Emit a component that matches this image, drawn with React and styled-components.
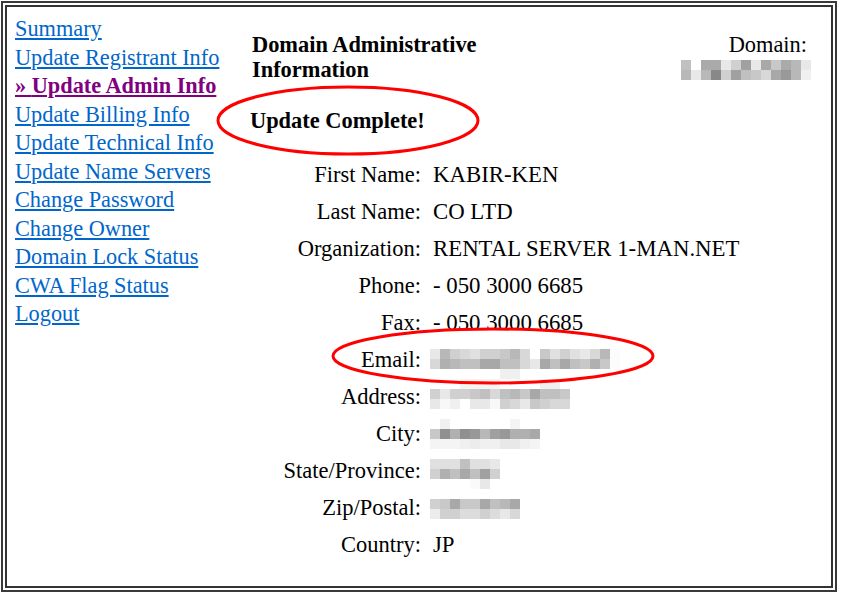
import React from 'react'
import styled, { createGlobalStyle } from 'styled-components'

const GlobalStyle = createGlobalStyle`
  html, body { margin: 0; padding: 0; background: #fff; }
  body { font-family: "Liberation Serif", "Times New Roman", serif; color: #000; }
`

// pixelated (blurred-out) values, 10px blocks, grey levels as hex pairs
const MOSAICS = {
  domain: [
    'c0 ff aa aa e8 d0 a0 e8 a8 c8 aa b8 e8',
    'b8 e8 b8 88 d0 a0 c0 c8 d8 a8 99 b8 f0',
  ],
  email: [
    'e8 b8 d0 d8 e0 d0 d0 c8 b8 d8 ff c8 e0 d0 e0 e8 d8 b8 fc',
    'd8 b0 b8 c0 c0 a8 a8 c0 c0 d8 e8 a8 c0 a8 c0 c8 b0 c8 fc',
    'ff ff ff ff ff ff ff f0 f0 ff ff ff ff ff ff ff ff ff ff',
  ],
  address: [
    'ff ff ff f4 f4 f4 f4 ff ff ff ff f0 f0 ff',
    'd0 e8 d0 d0 c8 c0 d8 c0 b8 c8 a8 c0 c0 c8',
    'e8 f8 f0 ff e8 e8 f8 d0 d8 e8 c8 d0 d8 d8',
  ],
  city: [
    'ff f0 ff ff ff ff ff ff f4 ff ff',
    'c8 90 b0 90 98 b8 a0 98 b0 b0 a8',
    'f4 f4 f4 f0 ec f0 f0 e8 e8 f0 f4',
  ],
  state: [
    'e0 e0 e0 c0 e0 e0 e8',
    'd0 b0 c0 a8 c0 a0 d0',
    'ff ff ff ff fa e8 ff',
  ],
  zip: [
    'd0 c8 a8 c8 c8 a8 c0 b8 a8',
    'ec d0 d0 dc dc d0 dc e8 d8',
  ],
}

const NAV = [
  'Summary',
  'Update Registrant Info',
  'Update Admin Info',
  'Update Billing Info',
  'Update Technical Info',
  'Update Name Servers',
  'Change Password',
  'Change Owner',
  'Domain Lock Status',
  'CWA Flag Status',
  'Logout',
]

const FIELDS = [
  { label: 'First Name:', value: 'KABIR-KEN' },
  { label: 'Last Name:', value: 'CO LTD' },
  { label: 'Organization:', value: 'RENTAL SERVER 1-MAN.NET' },
  { label: 'Phone:', value: '- 050 3000 6685' },
  { label: 'Fax:', value: '- 050 3000 6685' },
  { label: 'Email:', mosaic: 'email', top: 8 },
  { label: 'Address:', mosaic: 'address', top: 1 },
  { label: 'City:', mosaic: 'city', top: 4 },
  { label: 'State/Province:', mosaic: 'state', top: 7 },
  { label: 'Zip/Postal:', mosaic: 'zip', top: 10 },
  { label: 'Country:', value: 'JP' },
]

function Mosaic({ name, top = 0, shift = 0 }) {
  const rows = MOSAICS[name].map(r => r.split(' '))
  const w = rows[0].length * 10
  const h = rows.length * 10
  return (
    <MosaicSvg width={w} height={h} $top={top} $shift={shift} viewBox={`0 0 ${w} ${h}`}>
      {rows.map((row, y) =>
        row.map((g, x) => (
          <rect key={`${x}-${y}`} x={x * 10} y={y * 10} width="10" height="10" fill={`#${g}${g}${g}`} />
        ))
      )}
    </MosaicSvg>
  )
}

function Ring({ left, top, width, height }) {
  return (
    <RingSvg $left={left} $top={top} width={width + 6} height={height + 6}>
      <ellipse cx={width / 2 + 3} cy={height / 2 + 3} rx={width / 2} ry={height / 2}
        fill="none" stroke="#f00" strokeWidth="3" />
    </RingSvg>
  )
}

export default function App() {
  return (
    <>
      <GlobalStyle />
      <Frame>
        <Inner>
          <Sidebar>
            {NAV.map(item =>
              item === 'Update Admin Info'
                ? <NavLink key={item} href="#" $active>» {item}</NavLink>
                : <NavLink key={item} href="#">{item}</NavLink>
            )}
          </Sidebar>
          <Main>
            <Header>
              <Title>Domain Administrative<br />Information</Title>
              <DomainBox>
                <DomainLabel>Domain:</DomainLabel>
                <Mosaic name="domain" top={3} />
              </DomainBox>
            </Header>
            <Notice>Update Complete!</Notice>
            <Form>
              {FIELDS.map(f => (
                <React.Fragment key={f.label}>
                  <Label>{f.label}</Label>
                  <Value>{f.mosaic ? <Mosaic name={f.mosaic} top={f.top} shift={-3} /> : f.value}</Value>
                </React.Fragment>
              ))}
            </Form>
            <Ring left={-32} top={72} width={260} height={67} />
            <Ring left={83} top={314} width={320} height={54} />
          </Main>
        </Inner>
      </Frame>
    </>
  )
}

//#region styles
const Frame = styled.div`
  box-sizing: border-box;
  width: 836px;
  height: 591px;
  margin: 1px;
  border: 2px solid #3a3a3a;
  padding: 2px;
`
const Inner = styled.div`
  box-sizing: border-box;
  height: 100%;
  border: 2px solid #333;
  padding: 8px 0 0 8px;
  display: grid;
  grid-template-columns: 235px 1fr;
`
const Sidebar = styled.nav`
  display: flex;
  flex-direction: column;
  align-items: flex-start;
`
const NavLink = styled.a`
  font-size: 22.3px;
  line-height: 28.5px;
  color: ${p => (p.$active ? '#800080' : '#0066cc')};
  font-weight: ${p => (p.$active ? 'bold' : 'normal')};
  text-decoration: underline;
  text-underline-offset: 2px;
`
const Main = styled.main`
  position: relative;
  padding: 17px 20px 0 0;
`
const Header = styled.div`
  display: flex;
  justify-content: space-between;
  align-items: flex-start;
`
const Title = styled.h1`
  margin: 0;
  padding-left: 2px;
  font-size: 22.4px;
  line-height: 25px;
  font-weight: bold;
`
const DomainBox = styled.div`
  display: flex;
  flex-direction: column;
  align-items: flex-end;
`
const DomainLabel = styled.div`
  font-size: 22.4px;
  line-height: 25px;
  padding-right: 4px;
`
const MosaicSvg = styled.svg`
  display: block;
  margin-top: ${p => p.$top}px;
  margin-left: ${p => p.$shift}px;
`
const Notice = styled.h2`
  margin: 26px 0 0;
  font-size: 22.4px;
  line-height: 25px;
  font-weight: bold;
`
const Form = styled.div`
  margin-top: 23px;
  display: grid;
  grid-template-columns: 171px 1fr;
  grid-auto-rows: 37px;
  column-gap: 12px;
  font-size: 22.5px;
  line-height: 37px;
`
const Label = styled.div`
  text-align: right;
  white-space: nowrap;
`
const Value = styled.div`
  white-space: nowrap;
  font-size: 22.8px;
`
const RingSvg = styled.svg`
  position: absolute;
  left: ${p => p.$left - 3}px;
  top: ${p => p.$top - 3}px;
  pointer-events: none;
`
//#endregion
